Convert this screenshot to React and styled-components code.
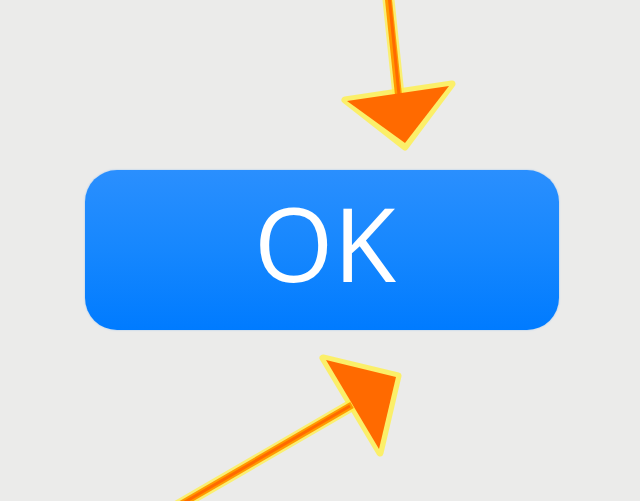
import React from 'react';
import styled, { createGlobalStyle } from 'styled-components';

const GlobalStyle = createGlobalStyle`
  html, body {
    margin: 0;
    padding: 0;
    background: #ebebea;
  }
`;

const Page = styled.div`
  position: relative;
  width: 640px;
  height: 501px;
  overflow: hidden;
  background: #ebebea;
  display: flex;
  align-items: flex-start;
  padding: 170px 0 0 85px;
  box-sizing: border-box;
`;

const OkButton = styled.button`
  width: 474px;
  height: 160px;
  border: none;
  border-radius: 32px;
  background: linear-gradient(to bottom, #2a8ffe 0%, #1687fe 50%, #007bff 100%);
  box-shadow: 0 0 2px rgba(0, 122, 255, 0.35);
  color: #ffffff;
  font-family: "Open Sans", "Noto Sans", sans-serif;
  font-weight: 400;
  font-size: 102px;
  line-height: 1;
  letter-spacing: 0;
  display: flex;
  align-items: center;
  justify-content: center;
  padding: 0 0 14px 6px;
  cursor: pointer;
`;

const Overlay = styled.svg`
  position: absolute;
  left: 0;
  top: 0;
  width: 640px;
  height: 501px;
  pointer-events: none;
`;

function Arrows() {
  const glow = '#fff14a';
  const orange = '#ff6a00';
  return (
    <Overlay viewBox="0 0 640 501">
      {/* top arrow */}
      <line x1="388" y1="-5" x2="399" y2="100" stroke={glow} strokeWidth="12" strokeLinecap="round" opacity="0.75" />
      <polygon points="345,100 452,84 405,147" fill={glow} stroke={glow} strokeWidth="7" strokeLinejoin="round" opacity="0.8" />
      <line x1="388" y1="-5" x2="399" y2="100" stroke="#ff9a00" strokeWidth="7" />
      <line x1="389" y1="-5" x2="399" y2="95" stroke={orange} strokeWidth="3" />
      <polygon points="347,101 449,86 405,143" fill={orange} />

      {/* bottom arrow */}
      <line x1="178" y1="506" x2="352" y2="405" stroke={glow} strokeWidth="12" strokeLinecap="round" opacity="0.75" />
      <polygon points="323,358 398,376 380,453" fill={glow} stroke={glow} strokeWidth="7" strokeLinejoin="round" opacity="0.8" />
      <line x1="178" y1="506" x2="352" y2="405" stroke="#ff9a00" strokeWidth="7" />
      <line x1="178" y1="506" x2="350" y2="406" stroke={orange} strokeWidth="3" />
      <polygon points="326,360 396,377 379,449" fill={orange} />
    </Overlay>
  );
}

export default function App() {
  return (
    <>
      <GlobalStyle />
      <Page>
        <OkButton type="button">OK</OkButton>
        <Arrows />
      </Page>
    </>
  );
}
